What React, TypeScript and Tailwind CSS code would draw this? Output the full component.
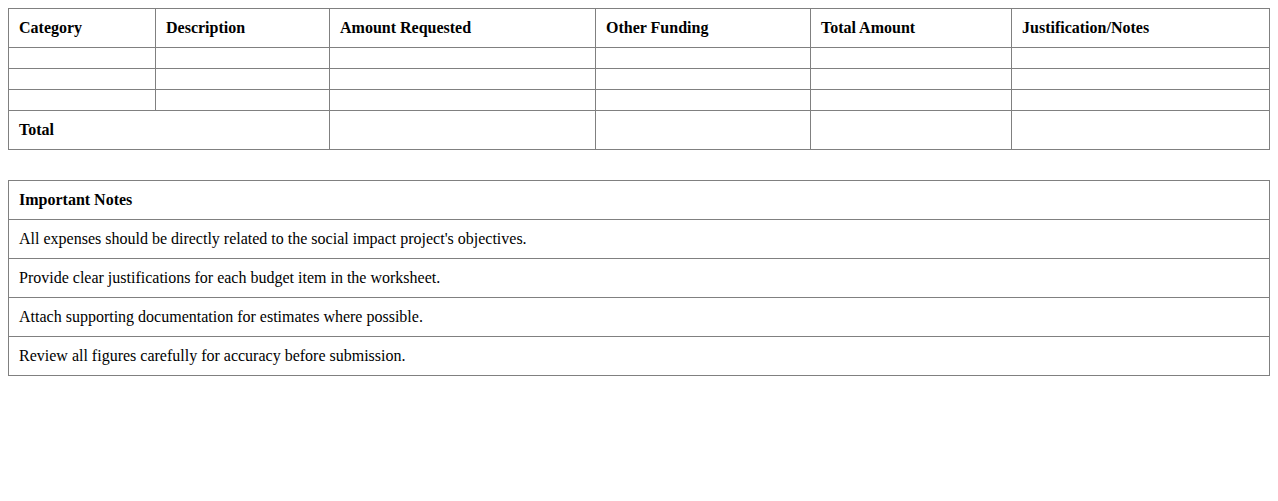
import React from "react";

const cell = "border border-[#808080] px-[10px] py-[10px] text-left align-middle leading-[normal]";

export default function App() {
  const headers = ["Category", "Description", "Amount Requested", "Other Funding", "Total Amount", "Justification/Notes"];
  const notes = [
    "All expenses should be directly related to the social impact project's objectives.",
    "Provide clear justifications for each budget item in the worksheet.",
    "Attach supporting documentation for estimates where possible.",
    "Review all figures carefully for accuracy before submission.",
  ];
  return (
    <div className="bg-white min-h-[501px] p-[8px] text-black text-[16px] font-['Liberation_Serif','Times_New_Roman',serif]">
      <table className="w-full table-fixed border-collapse">
        <colgroup>
          <col className="w-[147px]" />
          <col className="w-[174px]" />
          <col className="w-[266px]" />
          <col className="w-[215px]" />
          <col className="w-[201px]" />
          <col />
        </colgroup>
        <thead>
          <tr>
            {headers.map((h) => (
              <th key={h} className={`${cell} font-bold`}>{h}</th>
            ))}
          </tr>
        </thead>
        <tbody>
          {[0, 1, 2].map((r) => (
            <tr key={r}>
              {headers.map((h) => (
                <td key={h} className={cell}></td>
              ))}
            </tr>
          ))}
          <tr>
            <td colSpan={2} className={`${cell} font-bold`}>Total</td>
            <td className={cell}></td>
            <td className={cell}></td>
            <td className={cell}></td>
            <td className={cell}></td>
          </tr>
        </tbody>
      </table>
      <table className="w-full border-collapse mt-[30px]">
        <thead>
          <tr>
            <th className={`${cell} font-bold`}>Important Notes</th>
          </tr>
        </thead>
        <tbody>
          {notes.map((n) => (
            <tr key={n}>
              <td className={cell}>{n}</td>
            </tr>
          ))}
        </tbody>
      </table>
    </div>
  );
}
